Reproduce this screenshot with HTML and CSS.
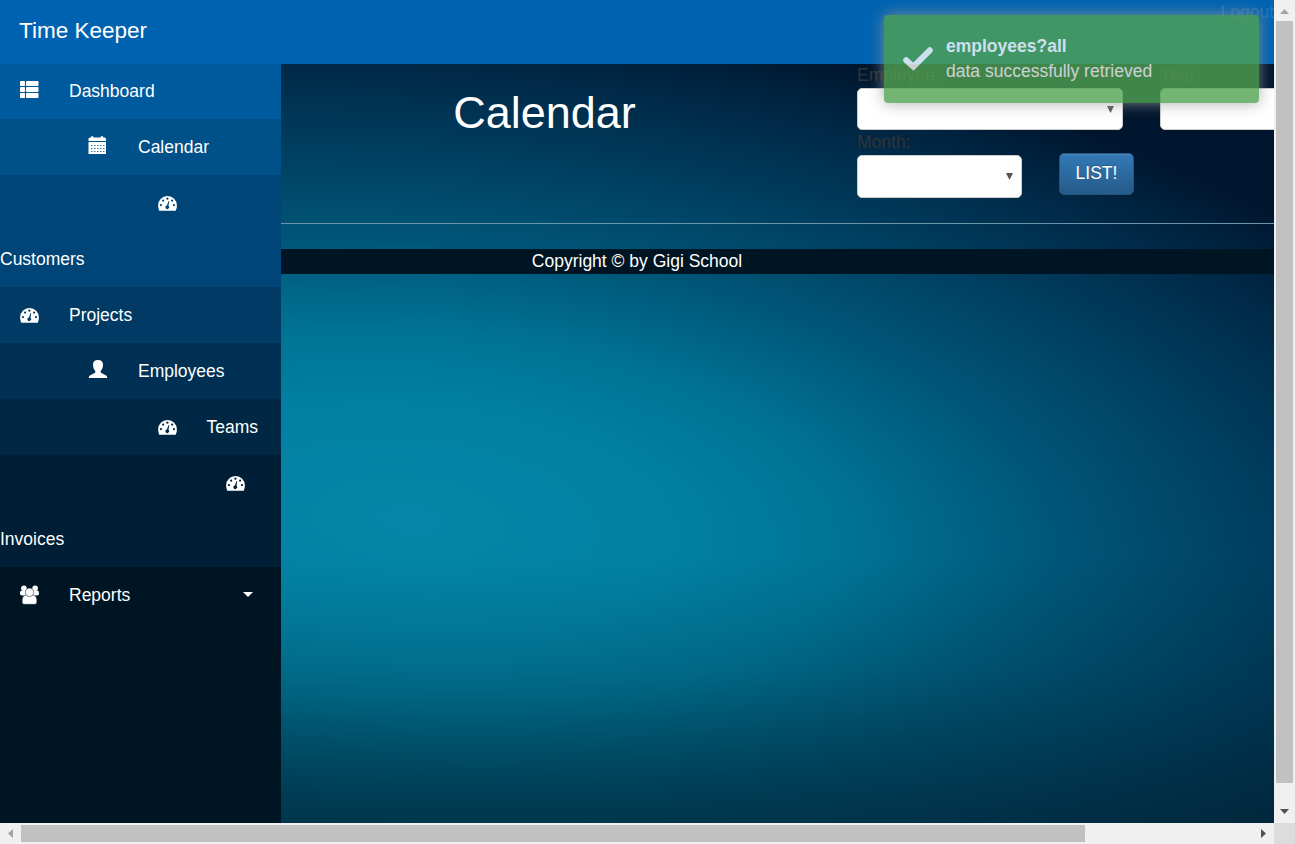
FILE: index.html
```html
<!DOCTYPE html>
<html lang="en">
<head>
<meta charset="utf-8">
<title>Time Keeper</title>
<link rel="stylesheet" href="styles.css">
</head>
<body>
<svg class="defs" width="0" height="0">
  <symbol id="dash" viewBox="0 0 20 16"><path fill="currentColor" fill-rule="evenodd" d="M10 0A9.900 9.900 0 0 0 0 10c0 2 .4 4 1.200 5.700h17.600A11 11 0 0 0 20 10 9.900 9.900 0 0 0 10 0ZM9.900 1.700a1.200 1.200 0 1 1 0 2.400 1.200 1.200 0 0 1 0-2.400ZM5.300 3.600a1.200 1.200 0 1 1 0 2.400 1.200 1.200 0 0 1 0-2.400ZM14.900 3.600a1.200 1.200 0 1 1 0 2.400 1.200 1.200 0 0 1 0-2.400ZM3 8.400a1.200 1.200 0 1 1 0 2.400 1.200 1.200 0 0 1 0-2.400ZM16.900 8.400a1.200 1.200 0 1 1 0 2.400 1.200 1.200 0 0 1 0-2.400ZM11.200 5.300l.7.2-.9 5a1.900 1.900 0 1 1-1.700-.4Z"/></symbol>
</svg>
<div class="window">
  <div class="page">
    <header class="topbar"><span class="brand">Time Keeper</span><a class="logout">Logout</a></header>
    <div class="body">
      <nav class="sidebar">
        <div class="item s1 first"><svg class="icon" viewBox="0 0 20 20"><g fill="#fff"><rect x="1" y="1" width="5" height="5" rx=".8"/><rect x="7" y="1" width="12.500" height="5" rx=".8"/><rect x="1" y="7" width="5" height="5" rx=".8"/><rect x="7" y="7" width="12.500" height="5" rx=".8"/><rect x="1" y="13" width="5" height="5" rx=".8"/><rect x="7" y="13" width="12.500" height="5" rx=".8"/></g></svg><span>Dashboard</span></div>
        <div class="item s2 in1"><svg class="icon" viewBox="0 0 20 20"><path fill="#fff" d="M.500 5V3q0-1.500 1.500-1.500h1Q3 0 4.200 0 5.500 0 5.500 1.500h7Q12.500 0 14 0q1.300 0 1.300 1.500h1.200Q18 1.500 18 3v2zM.500 6H18v12H.500z"/><path stroke="#00508a" stroke-width=".8" stroke-dasharray="1.500 1.500" d="M3 9.500h14M3 12.500h14M3 15.500h14"/></svg><span>Calendar</span></div>
        <div class="item s3 in2 tall"><svg class="icon gauge"><use href="#dash"/></svg><span class="wrapped">Customers</span></div>
        <div class="item s4"><svg class="icon gauge"><use href="#dash"/></svg><span>Projects</span></div>
        <div class="item s5 in1"><svg class="icon" viewBox="0 0 20 20"><path fill="#fff" d="M10 0c3.500 0 5 1.700 5 4.700 0 2.500-.8 4.800-2.300 6.300v1.500c1 1.200 4.300 2 5.800 3.300.500.500.700 1.200.700 2.200H.800c0-1 .200-1.700.700-2.200 1.500-1.300 4.800-2.100 5.800-3.300V11C5.800 9.500 5 7.200 5 4.700 5 1.700 6.500 0 10 0Z"/></svg><span>Employees</span></div>
        <div class="item s6 in2"><svg class="icon gauge"><use href="#dash"/></svg><span>Teams</span></div>
        <div class="item s7 in3 tall"><svg class="icon gauge"><use href="#dash"/></svg><span class="wrapped">Invoices</span></div>
        <div class="item s8"><svg class="icon group" viewBox="0 0 20 20"><g fill="#fff"><circle cx="4.400" cy="3.200" r="2.800"/><circle cx="15.600" cy="3.200" r="2.800"/><rect x=".5" y="5.500" width="7" height="5" rx="2"/><rect x="12.500" y="5.500" width="7" height="5" rx="2"/></g><path fill="#fff" stroke="#001524" stroke-width=".4" d="M2.700 17v-2c0-3 1.500-5 4.500-5h5.600c3 0 4.500 2 4.500 5v2c0 1.500-1 2.300-2.500 2.300H5.200c-1.500 0-2.500-.8-2.500-2.300Z"/><circle cx="10" cy="7.300" r="4.200" fill="#fff" stroke="#001524" stroke-width=".5"/></svg><span>Reports</span><i class="caret"></i></div>
      </nav>
      <main class="content">
        <svg class="backdrop" viewBox="281 64 993 759" preserveAspectRatio="none">
          <defs>
            <radialGradient id="glow" gradientUnits="userSpaceOnUse" cx="0" cy="0" r="1" gradientTransform="translate(410 520) rotate(4) scale(1200 515)">
              <stop offset="0" stop-color="#0487a8"/><stop offset=".22" stop-color="#0280a2"/><stop offset=".36" stop-color="#007495"/><stop offset=".54" stop-color="#005678"/><stop offset=".73" stop-color="#003c5e"/><stop offset=".89" stop-color="#002744"/><stop offset="1" stop-color="#00162e"/>
            </radialGradient>
            <linearGradient id="shade" x1="0" y1="0" x2="0" y2="1">
              <stop offset=".65" stop-color="#002632" stop-opacity="0"/><stop offset=".8" stop-color="#002a38" stop-opacity=".17"/><stop offset="1" stop-color="#002634" stop-opacity=".6"/>
            </linearGradient>
          </defs>
          <rect x="281" y="64" width="993" height="759" fill="url(#glow)"/>
          <rect x="281" y="64" width="993" height="759" fill="url(#shade)"/>
        </svg>
        <section class="heading">
          <h1>Calendar</h1>
          <form class="filters">
            <div class="row"><label class="employee">Employee:<span class="select"></span></label><label class="year">Year:<span class="select"></span></label></div>
            <div class="row"><label class="month">Month:<span class="select"></span></label><button type="button">LIST!</button></div>
          </form>
        </section>
        <footer>Copyright © by Gigi School</footer>
      </main>
    </div>
    <aside class="toast">
      <svg class="check" viewBox="0 0 30 24"><path fill="none" stroke="#fff" stroke-width="6" stroke-linecap="round" d="M3.200 13.200l7.200 6.500L26.800 3.300"/></svg>
      <div><b>employees?all</b><br>data successfully retrieved</div>
    </aside>
  </div>
  <div class="vbar"><svg class="arrow" viewBox="0 0 21 21"><path fill="#a3a3a3" d="M6 14h9l-4.500-5z"/></svg><div class="thumb"></div><svg class="arrow" viewBox="0 0 21 21"><path fill="#505050" d="M6 7h9l-4.500 5z"/></svg></div>
  <div class="hbar"><svg class="arrow" viewBox="0 0 21 21"><path fill="#a3a3a3" d="M13 6v9l-5-4.500z"/></svg><div class="thumb"></div><svg class="arrow" viewBox="0 0 21 21"><path fill="#505050" d="M8 6v9l5-4.500z"/></svg></div>
  <div class="corner"></div>
</div>
</body>
</html>
```
FILE: styles.css
```css
* { box-sizing: border-box; }
body { margin: 0; overflow: hidden; font: 17.5px/25px "Liberation Sans", Arial, sans-serif; color: #fff; }
.defs { position: absolute; }
.window { display: grid; grid-template: 823px 21px / 1274px 21px; width: 1295px; height: 844px; }
.page { position: relative; display: flex; flex-direction: column; overflow: hidden; }
.topbar { display: flex; justify-content: space-between; flex: 0 0 64px; padding-left: 19px; background: #0063b1; }
.brand { font-size: 22.5px; line-height: 62px; }
.logout { color: #2b73b2; }
.body { display: flex; flex: 1; }
.sidebar { width: 281px; background: #001524; }
.item { display: flex; flex-wrap: wrap; align-items: flex-start; height: 56px; padding-left: 19px; line-height: 57px; }
.item.first { height: 55px; line-height: 55px; }
.item.tall { height: 112px; line-height: 56px; }
.in1 { padding-left: 88px; }
.in2 { padding-left: 156.500px; }
.in3 { padding-left: 225px; }
.icon { width: 20px; height: 20px; margin: 17px 30px 0 0; flex: none; }
.first .icon { margin-top: 16px; }
.icon.gauge { width: 19px; height: 15px; margin-top: 21px; margin-right: 30px; margin-left: 1px; }
.icon.group { width: 21px; margin-top: 18px; margin-right: 29px; }
.s1 { background: #005a9e; }
.s2 { background: #00508a; }
.s3 { background: #004578; }
.s4 { background: #003a65; }
.s5 { background: #003054; }
.s6 { background: #002744; }
.s7 { background: #001e35; }
.s8 { background: #001524; }
.tall .icon.gauge { margin-bottom: 20px; }
.in2 .wrapped { flex: 0 0 281px; margin-left: -156.500px; }
.in3 .wrapped { flex: 0 0 281px; margin-left: -225px; }
.caret { margin: 25px 28px 0 auto; border: 5px solid transparent; border-top-color: #fff; border-bottom: 0; }
.content { position: relative; flex: 1; min-width: 0; }
.backdrop { position: absolute; inset: 0; width: 993px; height: 759px; }
.heading { position: relative; display: grid; grid-template-columns: 576px 1fr; height: 160px; border-bottom: 1px solid #6b95a8; }
h1 { margin: 24px 0 0 -49px; font-size: 45px; font-weight: 400; line-height: 49px; text-align: center; }
.filters { overflow: hidden; color: #333; line-height: 23px; }
.row { display: flex; height: 67px; }
label { flex: none; display: block; }
.employee { width: 266px; margin-right: 37px; }
.year { width: 266px; }
.month { width: 165px; margin-right: 37px; }
.select { display: block; height: 42px; margin-top: 1px; border: 1px solid #ccc; border-radius: 5px; background: #fff; }
.month .select { height: 43px; }
.select::after { content: ""; display: block; width: 7px; height: 7px; margin: 17px 8px 0 auto; background: #555; clip-path: polygon(0 0, 100% 0, 50% 100%); }
button { width: 75px; height: 42px; margin-top: 22px; padding: 0 0 2px; border: 1px solid #245580; border-radius: 5px; background: linear-gradient(#337ab7, #265a88); box-shadow: inset 0 1px rgba(255,255,255,.12); color: #fff; font: inherit; text-shadow: 0 -1px rgba(0,0,0,.2); }
footer { position: relative; height: 25px; margin-top: 25px; padding-right: 281px; background: #001524; text-align: center; line-height: 24px; }
.toast { position: absolute; left: 884px; top: 15px; display: flex; width: 375px; height: 88px; padding: 19px 19px 17px; border-radius: 4px; background: #51a351; box-shadow: 0 0 15px #999; opacity: .8; }
.check { width: 30px; height: 24px; margin: 13px 13px 0 0; }
.vbar, .hbar { display: flex; background: #f0f0f0; }
.vbar { flex-direction: column; }
.arrow { width: 21px; height: 21px; }
.thumb { background: #c1c1c1; }
.vbar .thumb { width: 17px; height: 762px; margin: 0 2px 19px; }
.hbar .thumb { width: 1064px; height: 17px; margin: 2px 168px 2px 0; }
.corner { background: #dcdcdc; }
```
